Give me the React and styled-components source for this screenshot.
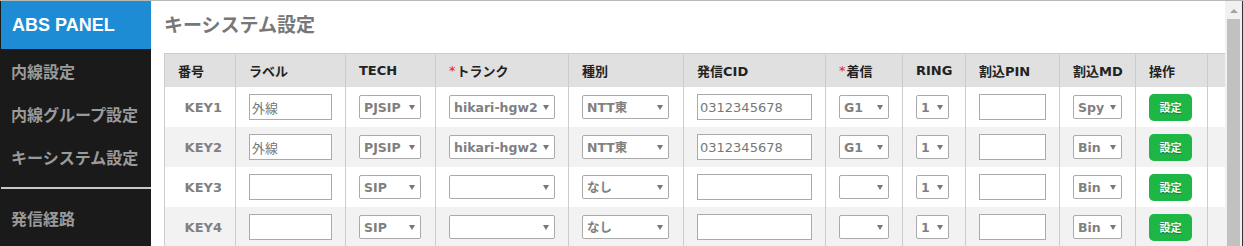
import React from "react";
import styled, { createGlobalStyle } from "styled-components";

const GlobalStyle = createGlobalStyle`
  html, body {
    margin: 0;
    padding: 0;
    background: #fff;
  }
  body {
    font-family: "DejaVu Sans", "Noto Sans CJK JP", sans-serif;
    font-size: 13px;
    color: #222;
  }
`;

const Page = styled.div`
  display: flex;
  height: 246px;
  box-sizing: border-box;
  border-top: 1px solid #b8b8b8;
  overflow: hidden;
`;

const Sidebar = styled.aside`
  width: 151px;
  flex: none;
  background: #1a1a1a;
  display: flex;
  flex-direction: column;
`;

const Brand = styled.div`
  height: 48px;
  margin-left: 1px;
  padding-left: 11px;
  display: flex;
  align-items: center;
  background: #1e8bd5;
  color: #fff;
  font-family: "Liberation Sans", Arial, sans-serif;
  font-weight: 700;
  font-size: 18px;
`;

const NavItem = styled.div`
  height: 43px;
  padding-left: 11px;
  display: flex;
  align-items: center;
  color: #9a9a9a;
  font-family: "Noto Sans CJK JP", sans-serif;
  font-weight: 700;
  font-size: 16px;
  white-space: nowrap;
`;

const NavDivider = styled.hr`
  margin: 9px 0 7px 1px;
  border: 0;
  border-top: 2px solid #c8c8c8;
`;

const Main = styled.main`
  flex: 1;
  min-width: 0;
  padding-left: 13px;
`;

const Title = styled.h1`
  margin: 9px 0 15px;
  line-height: 28px;
  font-family: "Noto Sans CJK JP", sans-serif;
  font-size: 19px;
  font-weight: 700;
  color: #777;
`;

const COLS = "71px 110px 90px 133px 115px 142px 77px 63px 94px 76px 72px 1fr";

const HeadRow = styled.div`
  display: grid;
  grid-template-columns: ${COLS};
  height: 33px;
  background: #e0e0e0;
  border-top: 1px solid #ccc;
`;

const Row = styled.div`
  display: grid;
  grid-template-columns: ${COLS};
  height: 40px;
  background: ${(p) => (p.$striped ? "#f2f2f2" : "#fff")};
`;

const HeadCell = styled.div`
  box-sizing: border-box;
  border-left: 1px solid #ccc;
  padding-left: 13px;
  display: flex;
  align-items: center;
  font-family: "DejaVu Sans", "Noto Sans CJK JP", sans-serif;
  font-weight: 700;
  font-size: 13px;
  color: #222;
  white-space: nowrap;
`;

const Required = styled.span`
  color: #e8210f;
  font-weight: 400;
  margin-right: 1px;
`;

const Cell = styled.div`
  box-sizing: border-box;
  border-left: 1px solid #ccc;
  padding-left: 13px;
  display: flex;
  align-items: center;
  justify-content: ${(p) => (p.$right ? "flex-end" : "flex-start")};
  padding-right: ${(p) => (p.$right ? "13px" : "0")};
`;

const KeyName = styled.span`
  font-weight: 700;
  color: #808080;
`;

const TextInput = styled.input`
  box-sizing: border-box;
  width: ${(p) => p.$w}px;
  height: 26px;
  margin: 0;
  padding: 0 2px;
  border: 1px solid #aaa;
  border-radius: 0;
  background: #fff;
  font-family: "DejaVu Sans", "Noto Sans CJK JP", sans-serif;
  font-size: 13px;
  color: #777;
  outline: none;
`;

const SelectWrap = styled.div`
  position: relative;
  width: ${(p) => p.$w}px;
  height: 24px;

  &::after {
    content: "";
    position: absolute;
    right: 6px;
    top: 10px;
    border-left: 3px solid transparent;
    border-right: 3px solid transparent;
    border-top: 5px solid #777;
    pointer-events: none;
  }
`;

const Select = styled.select`
  appearance: none;
  -webkit-appearance: none;
  box-sizing: border-box;
  width: 100%;
  height: 24px;
  margin: 0;
  padding: 0 12px 0 4px;
  border: 1px solid #aaa;
  border-radius: 2px;
  background: #fff;
  font-family: "DejaVu Sans", "Noto Sans CJK JP", sans-serif;
  font-size: 12.5px;
  font-weight: 700;
  color: #808080;
  outline: none;
`;

const Button = styled.button`
  width: 43px;
  height: 27px;
  padding: 0;
  border: 0;
  border-radius: 5px;
  background: #1eb746;
  color: #fff;
  font-family: "Noto Sans CJK JP", sans-serif;
  font-weight: 700;
  font-size: 11px;
  text-shadow: 0 1px 1px rgba(0, 0, 0, 0.35);
  cursor: pointer;
`;

const ScrollTrack = styled.div`
  width: 17px;
  flex: none;
  background: #f1f1f1;
  border-right: 1px solid #333;
  display: flex;
  flex-direction: column;
  align-items: center;
`;

const ScrollArrow = styled.div`
  margin-top: 8px;
  border-left: 4px solid transparent;
  border-right: 4px solid transparent;
  border-bottom: 4px solid #a3a3a3;
`;

const ScrollThumb = styled.div`
  margin-top: 6px;
  width: 13px;
  flex: 1;
  background: #c1c1c1;
`;

const headers = [
  { label: "番号" },
  { label: "ラベル" },
  { label: "TECH" },
  { label: "トランク", required: true },
  { label: "種別" },
  { label: "発信CID" },
  { label: "着信", required: true },
  { label: "RING" },
  { label: "割込PIN" },
  { label: "割込MD" },
  { label: "操作" },
  { label: "" },
];

const keys = [
  { key: "KEY1", label: "外線", tech: "PJSIP", trunk: "hikari-hgw2", kind: "NTT東", cid: "0312345678", inbound: "G1", ring: "1", md: "Spy" },
  { key: "KEY2", label: "外線", tech: "PJSIP", trunk: "hikari-hgw2", kind: "NTT東", cid: "0312345678", inbound: "G1", ring: "1", md: "Bin" },
  { key: "KEY3", label: "", tech: "SIP", trunk: "", kind: "なし", cid: "", inbound: "", ring: "1", md: "Bin" },
  { key: "KEY4", label: "", tech: "SIP", trunk: "", kind: "なし", cid: "", inbound: "", ring: "1", md: "Bin" },
];

const Dropdown = ({ width, value }) => (
  <SelectWrap $w={width}>
    <Select defaultValue={value}>
      <option value={value}>{value}</option>
    </Select>
  </SelectWrap>
);

const App = () => {
  return (
    <>
      <GlobalStyle />
      <Page>
        <Sidebar>
          <Brand>ABS PANEL</Brand>
          <NavItem>内線設定</NavItem>
          <NavItem>内線グループ設定</NavItem>
          <NavItem>キーシステム設定</NavItem>
          <NavDivider />
          <NavItem>発信経路</NavItem>
        </Sidebar>
        <Main>
          <Title>キーシステム設定</Title>
          <HeadRow>
            {headers.map((h, i) => (
              <HeadCell key={i}>
                {h.required && <Required>*</Required>}
                {h.label}
              </HeadCell>
            ))}
          </HeadRow>
          {keys.map((k, i) => (
            <Row key={k.key} $striped={i % 2 === 1}>
              <Cell $right>
                <KeyName>{k.key}</KeyName>
              </Cell>
              <Cell>
                <TextInput $w={83} defaultValue={k.label} />
              </Cell>
              <Cell>
                <Dropdown width={62} value={k.tech} />
              </Cell>
              <Cell>
                <Dropdown width={106} value={k.trunk} />
              </Cell>
              <Cell>
                <Dropdown width={87} value={k.kind} />
              </Cell>
              <Cell>
                <TextInput $w={115} defaultValue={k.cid} />
              </Cell>
              <Cell>
                <Dropdown width={50} value={k.inbound} />
              </Cell>
              <Cell>
                <Dropdown width={33} value={k.ring} />
              </Cell>
              <Cell>
                <TextInput $w={67} defaultValue="" />
              </Cell>
              <Cell>
                <Dropdown width={49} value={k.md} />
              </Cell>
              <Cell>
                <Button>設定</Button>
              </Cell>
              <Cell />
            </Row>
          ))}
        </Main>
        <ScrollTrack>
          <ScrollArrow />
          <ScrollThumb />
        </ScrollTrack>
      </Page>
    </>
  );
};

export default App;
